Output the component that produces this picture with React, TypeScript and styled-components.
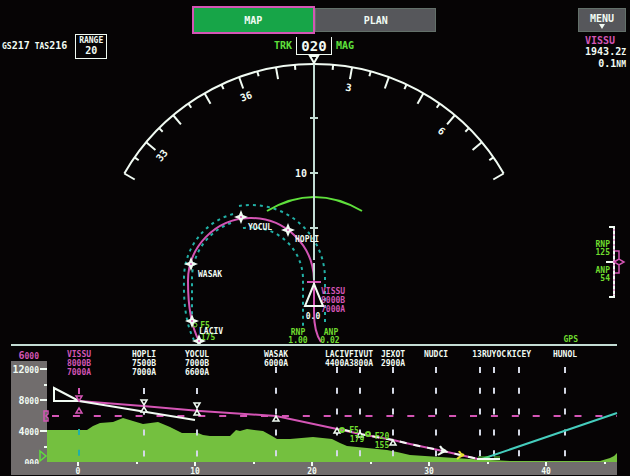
import React from 'react';
import styled, { createGlobalStyle } from 'styled-components';

const c = {
  bg: '#060405',
  white: '#f1fbf3',
  pale: '#c3dcd4',
  magenta: '#d455b5',
  green: '#5fe03c',
  lime: '#6fdc2f',
  terrain: '#74c03f',
  teal: '#22b0a6',
  cyan: '#45cdbd',
  gray: '#56575b',
  axis: '#716d6d',
  active: '#17a548',
};

const GlobalStyle = createGlobalStyle`
  * { box-sizing: border-box; }
  body { margin: 0; background: ${c.bg}; color: ${c.white}; }
  body, button, text { font-family: 'DejaVu Sans Mono', 'Liberation Mono', monospace; }
`;

const Page = styled.main`
  display: flex;
  flex-direction: column;
  background: ${c.bg};
  font-size: 10px;
  line-height: 11px;
`;

const Upper = styled.section`
  display: grid;
  grid-template-columns: 110px 1fr 112px;
`;

const Speeds = styled.div`
  display: flex;
  align-items: center;
  align-self: start;
  gap: 5px;
  height: 26px;
  margin-top: 33px;
  padding-left: 2px;
  white-space: nowrap;
  font-weight: bold;
`;

const Small = styled.small`
  font-size: 8px;
`;

const RangeBox = styled.div`
  margin-left: 3px;
  width: 32px;
  height: 25px;
  border: 1px solid ${c.white};
  display: flex;
  flex-direction: column;
  align-items: center;
  justify-content: center;
  line-height: 10px;
`;

const Center = styled.div`
  display: flex;
  flex-direction: column;
  align-items: center;
  padding-top: 6px;
`;

const Tabs = styled.nav`
  display: flex;
  align-items: center;
  width: 60%;
  height: 28px;
`;

const Tab = styled.button<{ $active?: boolean }>`
  flex: 1;
  height: ${(p) => (p.$active ? '28px' : '24px')};
  padding: 0;
  border: ${(p) => (p.$active ? `2px solid ${c.magenta}` : '1px solid #63706a')};
  background: ${(p) => (p.$active ? c.active : c.gray)};
  color: ${c.white};
  font-size: 10px;
  font-weight: bold;
`;

const Heading = styled.div`
  display: flex;
  align-items: center;
  gap: 4px;
  height: 21px;
  padding-top: 2px;
  color: ${c.green};
  font-weight: bold;
`;

const Track = styled.output`
  width: 36px;
  height: 18px;
  border: 1px solid ${c.white};
  border-top: 0;
  color: ${c.white};
  font-size: 14px;
  font-weight: bold;
  line-height: 18px;
  text-align: center;
`;

const Drawing = styled.svg`
  display: block;
  width: 100%;
  height: auto;
`;

const Side = styled.aside`
  display: flex;
  flex-direction: column;
  align-items: flex-end;
  padding: 8px 4px 0 0;
`;

const MenuButton = styled.button`
  display: flex;
  flex-direction: column;
  align-items: center;
  justify-content: center;
  width: 48px;
  height: 24px;
  padding: 2px 0 0;
  border: 1px solid #63706a;
  background: ${c.gray};
  color: ${c.white};
  font-size: 10px;
  line-height: 10px;
  font-weight: bold;
`;

const NextPoint = styled.div`
  display: flex;
  flex-direction: column;
  align-items: flex-end;
  padding-top: 3px;
`;

const NextName = styled.b`
  color: ${c.magenta};
  padding-right: 11px;
`;

const Deviation = styled.div`
  display: flex;
  align-items: center;
  margin-top: auto;
  margin-bottom: 38px;
`;

const DeviationValues = styled.div`
  display: flex;
  flex-direction: column;
  gap: 10px;
  margin-right: -4px;
  color: ${c.lime};
  font-size: 8px;
  font-weight: bold;
  line-height: 8px;
  text-align: right;
  white-space: pre-line;
`;

const DeviationScale = styled.svg`
  display: block;
  width: 24px;
  height: 72px;
  margin-right: -4px;
`;

const Source = styled.div`
  padding-right: 48px;
  color: ${c.lime};
  font-size: 8px;
  line-height: 8px;
  font-weight: bold;
`;

const Label = styled.text<{ $size?: number; $bold?: boolean }>`
  font-size: ${(p) => p.$size ?? 8}px;
  font-weight: ${(p) => (p.$bold === false ? 'normal' : 'bold')};
`;

const CX = 314;
const CY = 283;
const R = 219;
const polar = (deg: number, r: number): [number, number] => [
  CX + r * Math.sin((deg * Math.PI) / 180),
  CY - r * Math.cos((deg * Math.PI) / 180),
];
const ticks = Array.from({ length: 25 }, (_, i) => -60 + i * 5);
const bearings: [number, string][] = [[-50, '33'], [-20, '36'], [10, '3'], [40, '6']];

const fixes: [number, number, string, number, number][] = [
  [241, 217, 'YOCUL', 248, 230],
  [288, 230, 'HOPLI', 295, 242],
  [191, 264, 'WASAK', 198, 277],
  [192, 321, '', 0, 0],
  [199, 341, 'LACIV', 199, 334],
];

function Compass() {
  const [lx, ly] = polar(-60, R);
  const [rx, ry] = polar(60, R);
  return (
    <g stroke={c.white} strokeWidth="2" fill="none">
      <path d={`M${lx} ${ly}A${R} ${R} 0 0 1 ${rx} ${ry}`} />
      {ticks.map((t) => {
        const [x1, y1] = polar(t, R);
        const [x2, y2] = polar(t, R - (t % 10 === 0 ? 12 : 5));
        return <line key={t} x1={x1} y1={y1} x2={x2} y2={y2} />;
      })}
      {bearings.map(([deg, text]) => {
        const [x, y] = polar(deg, 199);
        return (
          <Label key={text} $size={10} x={x} y={y + 4} textAnchor="middle" stroke="none"
            fill={c.white} transform={`rotate(${deg} ${x} ${y})`}>{text}</Label>
        );
      })}
    </g>
  );
}

function NavMap() {
  return (
    <Drawing viewBox="110 55 408 289" role="img" aria-label="Navigation map">
      <Compass />
      <g stroke={c.teal} strokeWidth="2" strokeDasharray="3 4" fill="none">
        <path d="M239 206A74 74 0 0 1 325 280V322" />
        <path d="M243 228A52 52 0 0 1 303 280V326" />
        <path d="M233 214A67 67 0 0 0 184 280Q183 318 194 340" />
        <path d="M231 223A59 59 0 0 0 192 280V316" />
      </g>
      <path d="M267 211Q314 183 362 211" fill="none" stroke={c.green} strokeWidth="2" />
      <path d="M199 341Q188 320 188 282A63 63 0 0 1 314 280V312Q314 332 321 342" fill="none" stroke={c.magenta} strokeWidth="2" />
      <g stroke={c.pale} strokeWidth="2">
        <path d="M314 64V260M314 263V280" />
        <path d="M310 118H318M310 173H318M310 228H318" />
      </g>
      <path d="M310 56H318L314 63Z" fill={c.bg} stroke={c.white} strokeWidth="2" />
      <Label $size={10} x="307" y="177" textAnchor="end" fill={c.white}>10</Label>
      <path d="M307 282H321" stroke={c.magenta} strokeWidth="2" />
      <g fill={c.magenta}>
        <Label x="321" y="294">VISSU</Label>
        <Label x="321" y="303">8000B</Label>
        <Label x="321" y="312">7000A</Label>
      </g>
      <path d="M314 284L305 306H323Z" fill="none" stroke={c.white} strokeWidth="2" />
      <Label x="313" y="319" textAnchor="middle" fill={c.white}>0.0</Label>
      <g fill={c.lime} textAnchor="middle">
        <Label x="298" y="335">RNP</Label>
        <Label x="298" y="343">1.00</Label>
        <Label x="331" y="335">ANP</Label>
        <Label x="330" y="343">0.02</Label>
        <Label x="205" y="328">F5</Label>
        <Label x="208" y="340">175</Label>
      </g>
      <circle cx="195" cy="325" r="2" fill="none" stroke={c.lime} />
      {fixes.map(([x, y, name, tx, ty]) => (
        <g key={y}>
          <path d={`M${x} ${y - 7}L${x + 2} ${y - 2}L${x + 7} ${y}L${x + 2} ${y + 2}L${x} ${y + 7}L${x - 2} ${y + 2}L${x - 7} ${y}L${x - 2} ${y - 2}Z`} fill={c.white} />
          <circle cx={x} cy={y} r="1" fill={c.magenta} />
          {name && <Label x={tx} y={ty} fill={c.white}>{name}</Label>}
        </g>
      ))}
    </Drawing>
  );
}

type Stop = { x: number; lines: string[]; magenta?: boolean; down?: number; up?: number; labelX?: number };
const stops: Stop[] = [
  { x: 79, lines: ['VISSU', '8000B', '7000A'], magenta: true, down: 398, up: 411 },
  { x: 144, lines: ['HOPLI', '7500B', '7000A'], down: 402, up: 410 },
  { x: 197, lines: ['YOCUL', '7000B', '6600A'], down: 405, up: 413 },
  { x: 276, lines: ['WASAK', '6000A'], up: 419 },
  { x: 337, lines: ['LACIV', '4400A'], up: 431 },
  { x: 360, lines: ['FIVUT', '3800A'], up: 435, labelX: 361 },
  { x: 393, lines: ['JEXOT', '2900A'], up: 443 },
  { x: 436, lines: ['NUDCI'] },
  { x: 480, lines: ['13'], labelX: 477 },
  { x: 494, lines: ['RUYOC'] },
  { x: 519, lines: ['KICEY'] },
  { x: 565, lines: ['HUNOL'] },
];

const altitudes: [string, string, number][] = [['12', '000', 369], ['8', '000', 400], ['4', '000', 431], ['', '000', 462]];

function Profile() {
  return (
    <Drawing viewBox="0 344 630 132" role="img" aria-label="Vertical profile">
      <path d="M11 345H617" stroke={c.pale} strokeWidth="2" />
      <path d="M11 361H47V462H617V475H11Z" fill={c.axis} />
      <path fill={c.terrain} d="M47 430H87L93 426L100 423L113 422L123 418L133 421L143 424L158 422L170 427L182 433H198L203 435L210 436H230L236 430L240 431L247 429L263 431L272 436L277 439H290L313 437L332 439L340 443L347 446L387 450L397 452L410 455L440 457L470 459L510 461H600L610 458L614 456L617 453V462H47Z" />
      <path d="M52 416H617" stroke={c.magenta} strokeWidth="2" strokeDasharray="7 13.9" />
      {stops.map(({ x, lines, magenta, labelX }) => (
        <g key={x} fill={magenta ? c.magenta : c.white}>
          <path d={`M${x} ${lines.length > 2 ? 388 : 367}V${magenta ? 396 : 457}`} strokeDasharray="6 14.8"
            stroke={magenta ? c.magenta : '#d3d8e4'} strokeWidth="2" />
          {magenta && <path d={`M${x} 429V457`} strokeDasharray="6 14.8" stroke={c.teal} strokeWidth="2" />}
          {lines.map((line, i) => (
            <Label key={line} x={labelX ?? x} y={357 + i * 9} textAnchor="middle">{line}</Label>
          ))}
        </g>
      ))}
      <g fill="none" strokeWidth="2">
        <path d="M79 401L143 406L200 411L276 416L337 429L360 434L393 440L410 444L443 451L478 459" stroke={c.magenta} />
        <path d="M345 430L360 434L393 440L410 444L443 451L478 459" stroke={c.white} strokeDasharray="7 7" />
        <path d="M54 388V401H79ZM79 401L195 420" stroke={c.white} />
        <path d="M482 459L617 413" stroke={c.cyan} />
        <path d="M477 459H500" stroke={c.white} />
        <path d="M478 457H490M494 457H500" stroke={c.green} strokeWidth="1" />
        <path d="M440 446Q442 450 446 451Q442 452 438 455" stroke={c.white} />
        <path d="M459 451Q460 454 464 455Q460 456 457 459" stroke="#e4df31" />
      </g>
      {stops.map(({ x, magenta, up, down }) => (
        <g key={x} fill={c.bg} stroke={magenta ? c.magenta : c.white} strokeWidth="1.5">
          {down && <path d={`M${x - 3} ${down - 2}H${x + 3}L${x} ${down + 3}Z`} />}
          {up && <path d={`M${x - 3} ${up + 2}H${x + 3}L${x} ${up - 3}Z`} />}
        </g>
      ))}
      <g fill="none" stroke={c.lime} strokeWidth="2">
        <circle cx="342" cy="430" r="2" />
        <circle cx="368" cy="434" r="2" />
      </g>
      <g fill={c.lime} textAnchor="middle">
        <Label x="354" y="433">F5</Label>
        <Label x="357" y="442">179</Label>
        <Label x="382" y="439">F20</Label>
        <Label x="382" y="448">155</Label>
      </g>
      <clipPath id="zero-clip"><path d="M0 344H60V464H0Z" /></clipPath>
      <g fill={c.white} textAnchor="end" clipPath="url(#zero-clip)">
        {altitudes.map(([big, small, y]) => (
          <Label key={y} $size={10} x="39" y={y + 4}>
            {big}<tspan fontSize="8">{small}</tspan>
          </Label>
        ))}
      </g>
      <Label $size={10} x="39" y="359" textAnchor="end" fill={c.magenta}>6<tspan fontSize="8">000</tspan></Label>
      <path d="M40 369H47M40 400H47M40 431H47M44 385H47M44 447H47" stroke={c.white} strokeWidth="2" />
      <path d="M44 411H48V414L46 416L48 418V421H44Z" fill="none" stroke={c.magenta} strokeWidth="1.5" />
      <path d="M40 451L46 456L40 461Z" fill="none" stroke={c.green} strokeWidth="1.5" />
      {[0, 10, 20, 30, 40].map((n) => (
        <g key={n} fill={c.white}>
          <path d={`M${78 + n * 11.7} 462V466`} stroke={c.white} strokeWidth="2" />
          <path d={`M${137 + n * 11.7} 462V464`} stroke={c.white} strokeWidth="2" />
          <Label x={78 + n * 11.7} y="474" textAnchor="middle">{n}</Label>
        </g>
      ))}
    </Drawing>
  );
}

export default function App() {
  return (
    <>
      <GlobalStyle />
      <Page>
        <Upper>
          <Speeds>
            <span><Small>GS</Small>217</span>
            <span><Small>TAS</Small>216</span>
            <RangeBox><Small>RANGE</Small><span>20</span></RangeBox>
          </Speeds>
          <Center>
            <Tabs>
              <Tab type="button" $active>MAP</Tab>
              <Tab type="button">PLAN</Tab>
            </Tabs>
            <Heading><span>TRK</span><Track>020</Track><span>MAG</span></Heading>
            <NavMap />
          </Center>
          <Side>
            <MenuButton type="button">
              MENU
              <svg width="6" height="5" viewBox="0 0 6 5"><path d="M0 0H6L3 5Z" fill={c.white} /></svg>
            </MenuButton>
            <NextPoint>
              <NextName>VISSU</NextName>
              <b>1943.2<Small>Z</Small></b>
              <b>0.1<Small>NM</Small></b>
            </NextPoint>
            <Deviation>
              <DeviationValues>
                <span>{'RNP\n125'}</span>
                <span>{'ANP\n54'}</span>
              </DeviationValues>
              <DeviationScale viewBox="0 0 24 72">
                <path d="M3 1H8V71H3M0 36H8" fill="none" stroke={c.white} strokeWidth="2" />
                <path d="M8 3V69" stroke={c.magenta} strokeDasharray="2 3" />
                <path d="M9 25H13V33M13 39V47H9M8 36L13 33L18 36L13 39Z" fill="none" stroke={c.magenta} strokeWidth="1.5" />
              </DeviationScale>
            </Deviation>
            <Source>GPS</Source>
          </Side>
        </Upper>
        <Profile />
      </Page>
    </>
  );
}
